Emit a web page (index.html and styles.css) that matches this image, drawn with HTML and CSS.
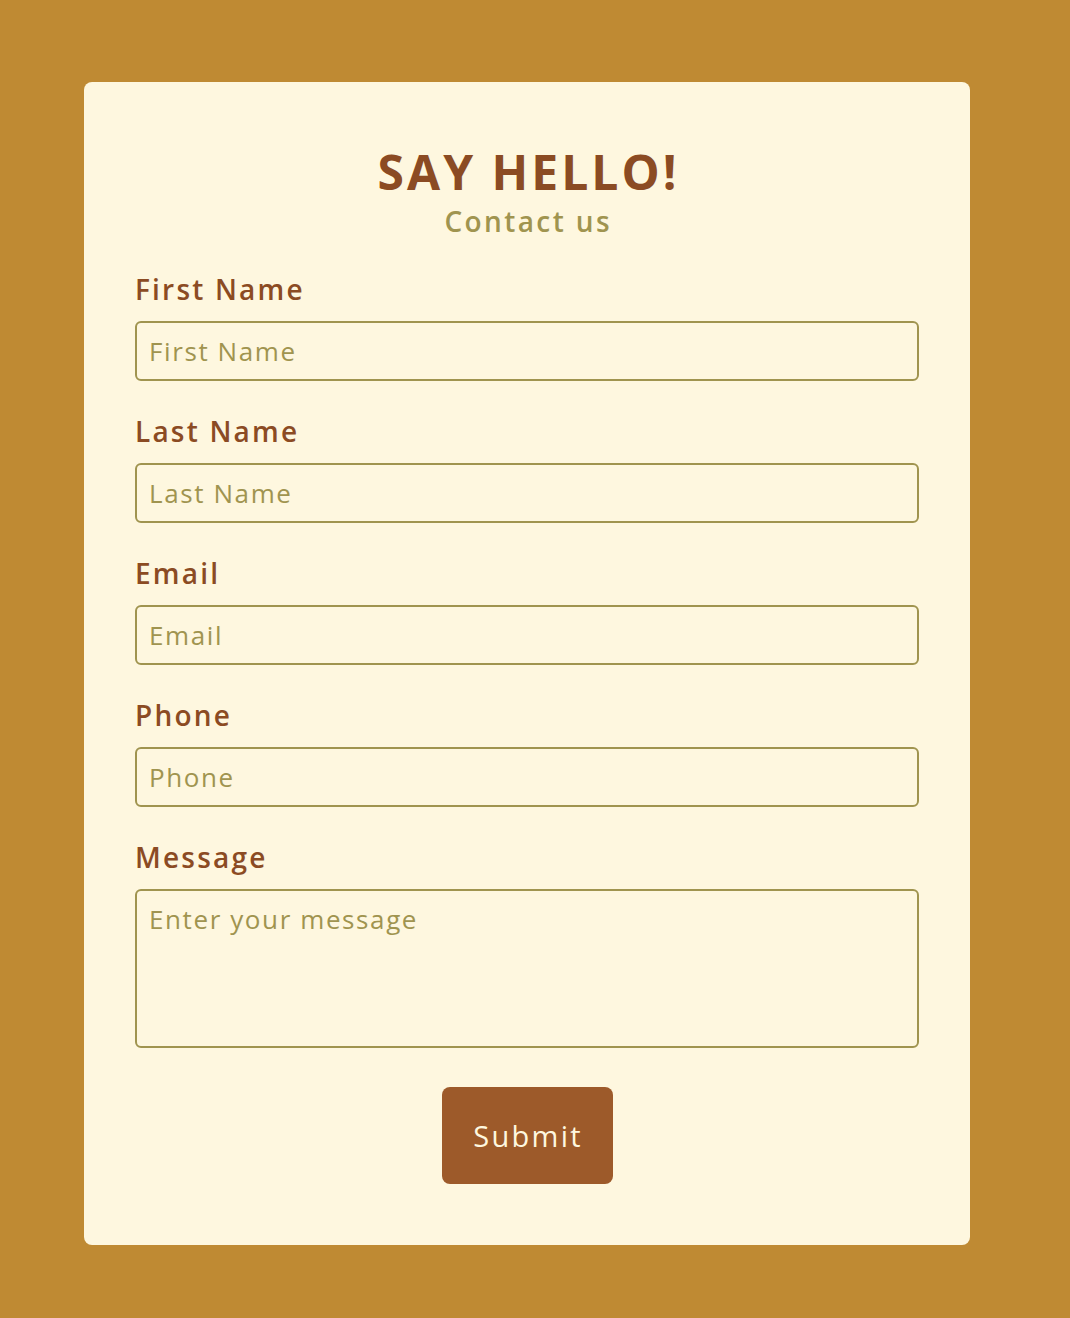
FILE: index.html
```html
<!DOCTYPE html>
<html lang="en">
<head>
<meta charset="utf-8">
<title>Say Hello</title>
<link rel="stylesheet" href="styles.css">
</head>
<body>
<main class="card">
  <header class="head">
    <h1 class="title">SAY HELLO!</h1>
    <p class="subtitle">Contact us</p>
  </header>
  <form class="form">
    <div class="field">
      <label class="label" for="fn">First Name</label>
      <input class="input" id="fn" type="text" placeholder="First Name">
    </div>
    <div class="field">
      <label class="label" for="ln">Last Name</label>
      <input class="input" id="ln" type="text" placeholder="Last Name">
    </div>
    <div class="field">
      <label class="label" for="em">Email</label>
      <input class="input" id="em" type="email" placeholder="Email">
    </div>
    <div class="field">
      <label class="label" for="ph">Phone</label>
      <input class="input" id="ph" type="tel" placeholder="Phone">
    </div>
    <div class="field field-last">
      <label class="label" for="msg">Message</label>
      <textarea class="input textarea" id="msg" placeholder="Enter your message"></textarea>
    </div>
    <div class="actions">
      <button class="submit" type="button">Submit</button>
    </div>
  </form>
</main>
</body>
</html>
```

FILE: styles.css
```css
* { box-sizing: border-box; }
html, body { margin: 0; }
body {
  background: #bf8a33;
  padding: 82px 100px 74px 84px;
  font-family: "Open Sans", "DejaVu Sans", sans-serif;
}
.card {
  width: 886px;
  background: #fef7df;
  border-radius: 8px;
  padding: 61px 51px 61px;
}
.head { text-align: center; margin-bottom: 34px; }
.title {
  margin: 0;
  font-size: 48px;
  line-height: 58px;
  font-weight: 700;
  letter-spacing: 3px;
  text-indent: 3px;
  color: #8b4b23;
  height: 61px;
}
.subtitle {
  margin: 0;
  font-size: 28px;
  line-height: 34px;
  font-weight: 600;
  letter-spacing: 2.4px;
  text-indent: 2.4px;
  color: #a0944f;
}
.form { display: flex; flex-direction: column; }
.field { display: flex; flex-direction: column; margin-bottom: 33px; }
.field-last { margin-bottom: 39px; }
.label {
  font-size: 28px;
  line-height: 34px;
  font-weight: 600;
  letter-spacing: 2.2px;
  color: #8b4b23;
  margin-bottom: 15px;
}
.input {
  width: 100%;
  height: 60px;
  border: 2px solid #a0944f;
  border-radius: 6px;
  background: #fef7df;
  padding: 0 12px;
  font-family: inherit;
  font-size: 26px;
  letter-spacing: 1.6px;
  color: #a0944f;
  outline: none;
}
.input::placeholder { color: #a0944f; opacity: 1; }
.textarea {
  height: 159px;
  padding: 10px 12px;
  resize: none;
  display: block;
}
.actions { display: flex; justify-content: center; }
.submit {
  width: 171px;
  height: 97px;
  border: none;
  border-radius: 8px;
  background: #9d5a2a;
  color: #fef7df;
  font-family: inherit;
  font-size: 29px;
  font-weight: 400;
  letter-spacing: 2.3px;
  text-indent: 2.3px;
}
```
